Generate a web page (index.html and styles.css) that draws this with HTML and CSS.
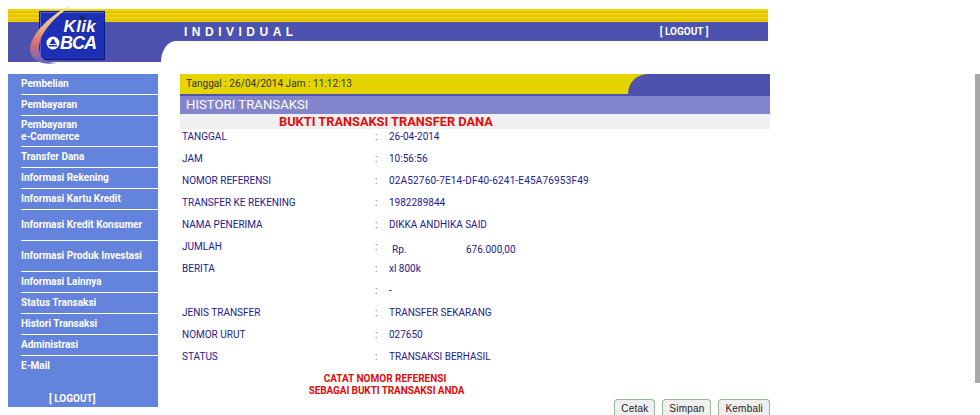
FILE: index.html
```html
<!DOCTYPE html>
<html lang="id">
<head>
<meta charset="utf-8">
<title>KlikBCA Individual</title>
<link rel="stylesheet" href="styles.css">
</head>
<body>
<div class="scrollbar"></div>
<header class="header">
  <div class="stripes"></div>
  <div class="band">
    <span class="brand">INDIVIDUAL</span>
    <a class="logout">[ LOGOUT ]</a>
  </div>
  <div class="lower"><div class="lower-white"></div></div>
  <div class="logo">
    <div class="logo-box">
      <span class="klik">Klik</span>
      <span class="bca">BCA</span>
    </div>
    <svg class="swoosh" viewBox="0 0 90 75" width="90" height="75"><defs><linearGradient id="sw" x1="0" y1="0" x2="0" y2="1"><stop offset="0" stop-color="#f6eea8"/><stop offset=".4" stop-color="#e8b080"/><stop offset=".65" stop-color="#d86f70"/><stop offset="1" stop-color="#5f66c0"/></linearGradient></defs><path d="M50 4C28 13 7 33 6 49c0 11 12 17 27 14-11 0-17-5-17-10C11 36 31 16 50 4z" fill="url(#sw)"/><circle cx="58" cy="18" r="2.500" fill="#1a2268"/><circle cx="29" cy="43" r="6.500" fill="#fff"/><path d="M29 38.500l2.200 3h-.6l2 2.500h-7.200l2-2.500h-.6z" fill="#1d2fb5"/><rect x="25" y="45" width="8" height="1.500" fill="#1d2fb5"/></svg>
  </div>
</header>
<div class="page">
  <nav class="menu">
    <a class="item">Pembelian</a>
    <a class="item">Pembayaran</a>
    <a class="item tall">Pembayaran<br>e-Commerce</a>
    <a class="item">Transfer Dana</a>
    <a class="item">Informasi Rekening</a>
    <a class="item">Informasi Kartu Kredit</a>
    <a class="item wide">Informasi Kredit Konsumer</a>
    <a class="item wide">Informasi Produk Investasi</a>
    <a class="item">Informasi Lainnya</a>
    <a class="item">Status Transaksi</a>
    <a class="item">Histori Transaksi</a>
    <a class="item">Administrasi</a>
    <a class="item last">E-Mail</a>
    <a class="menu-logout">[ LOGOUT]</a>
  </nav>
  <main class="main">
    <div class="datebar">
      <div class="date">Tanggal : 26/04/2014 Jam : 11:12:13</div>
      <div class="date-end"></div>
    </div>
    <div class="section">HISTORI TRANSAKSI</div>
    <div class="title">BUKTI TRANSAKSI TRANSFER DANA</div>
    <div class="rows">
      <div class="row"><span>TANGGAL</span><span class="sep">:</span><span>26-04-2014</span></div>
      <div class="row"><span>JAM</span><span class="sep">:</span><span>10:56:56</span></div>
      <div class="row"><span>NOMOR REFERENSI</span><span class="sep">:</span><span class="ref">02A52760-7E14-DF40-6241-E45A76953F49</span></div>
      <div class="row"><span>TRANSFER KE REKENING</span><span class="sep">:</span><span>1982289844</span></div>
      <div class="row"><span>NAMA PENERIMA</span><span class="sep">:</span><span>DIKKA ANDHIKA SAID</span></div>
      <div class="row"><span>JUMLAH</span><span class="sep">:</span><span class="amount"><span class="rp">Rp.</span><span>676.000,00</span></span></div>
      <div class="row"><span>BERITA</span><span class="sep">:</span><span>xl 800k</span></div>
      <div class="row"><span></span><span class="sep">:</span><span>-</span></div>
      <div class="row"><span>JENIS TRANSFER</span><span class="sep">:</span><span>TRANSFER SEKARANG</span></div>
      <div class="row"><span>NOMOR URUT</span><span class="sep">:</span><span>027650</span></div>
      <div class="row"><span>STATUS</span><span class="sep">:</span><span>TRANSAKSI BERHASIL</span></div>
    </div>
    <div class="note">CATAT NOMOR REFERENSI<br><span class="note-second">SEBAGAI BUKTI TRANSAKSI ANDA</span></div>
    <div class="actions">
      <button class="btn">Cetak</button>
      <button class="btn">Simpan</button>
      <button class="btn">Kembali</button>
    </div>
  </main>
</div>
</body>
</html>
```
FILE: styles.css
```css
html, body { margin: 0; padding: 0; height: 415px; overflow: hidden; background: #fff; font-family: Roboto, "Liberation Sans", sans-serif; }
.scrollbar { position: absolute; left: 975px; top: 74px; width: 5px; height: 309px; background: #a8a8a8; }
.header { position: relative; width: 760px; margin: 9px 0 0 8px; }
.stripes { height: 13px; background: repeating-linear-gradient(180deg, #f0d400 0, #f0d400 2px, #e2c20c 2px, #e2c20c 4px); }
.band { height: 19px; background: #4c52ae; display: flex; align-items: center; color: #fff; }
.brand { margin-left: 176px; font: 700 12px "Liberation Sans", sans-serif; letter-spacing: 4.5px; }
.logout { margin-left: 362px; font-size: 10px; font-weight: 700; }
.lower { height: 21px; background: #4c52ae; padding-left: 153px; }
.lower-white { height: 21px; background: #fff; border-top-left-radius: 15px 21px; }
.logo { position: absolute; left: 16px; top: -9px; width: 90px; height: 75px; }
.swoosh { position: absolute; left: 0; top: 0; }
.logo-box { position: absolute; left: 15px; top: 11px; width: 66px; height: 49px; box-sizing: border-box; background: #1d2fb5; border: 1px solid #0e1a78; box-shadow: inset 1px 1px 0 #5060e0; display: flex; flex-direction: column; align-items: flex-end; padding: 8px 8px 0 0; color: #fff; font: italic 900 17px/14px "Liberation Sans", sans-serif; }
.klik { letter-spacing: .3px; }
.bca { font-size: 18px; line-height: 18px; letter-spacing: -1px; }
.page { display: flex; margin: 12px 0 0 8px; }
.menu { width: 150px; height: 333px; background: #6483dc; display: flex; flex-direction: column; color: #fff; font-size: 10px; font-weight: 700; }
.item { height: 20px; margin-left: 13px; border-bottom: 1px solid #fff; display: flex; align-items: center; line-height: 12px; }
.item.tall { display: block; padding-top: 3px; height: 27px; }
.item.wide { height: 30px; }
.item.last { border: 0; }
.menu-logout { margin: 17px 0 0 41px; }
.main { width: 590px; margin-left: 22px; font-size: 10px; color: #1c2090; }
.datebar { display: flex; height: 20px; background: #e5d400; border-bottom: 2px solid #4c52ae; }
.date { width: 442px; line-height: 20px; padding-left: 6px; color: #333; letter-spacing: .05px; }
.date-end { flex: 1; background: #4c52ae; border-top-left-radius: 20px; }
.section { height: 18px; line-height: 18px; padding-left: 6px; background: #8385cc; color: #fff; font-size: 13.2px; }
.title { height: 15px; line-height: 15px; padding-left: 99px; background: #f0f0f0; color: #e00d0d; font-size: 12.8px; font-weight: 700; }
.rows { margin-top: -4px; }
.row { display: grid; grid-template-columns: 193px 14px 1fr; height: 22px; align-items: center; padding-left: 2px; }
.sep { color: #777; }
.ref { letter-spacing: .17px; }
.amount { display: flex; padding: 7px 0 0 3px; }
.rp { width: 74px; }
.note { margin-top: 6px; width: 410px; text-align: center; color: #e00d0d; font-weight: 700; line-height: 12px; }
.note-second { display: inline-block; padding-left: 3px; letter-spacing: -.1px; }
.actions { display: flex; justify-content: flex-end; gap: 7px; margin-top: 2px; }
.btn { height: 20px; padding: 0 6px 2px; border: 1px solid #9ab59a; border-bottom: 0; border-radius: 4px 4px 0 0; background: #efefef; font: 10px "Liberation Sans", sans-serif; letter-spacing: .2px; color: #222; }
```
